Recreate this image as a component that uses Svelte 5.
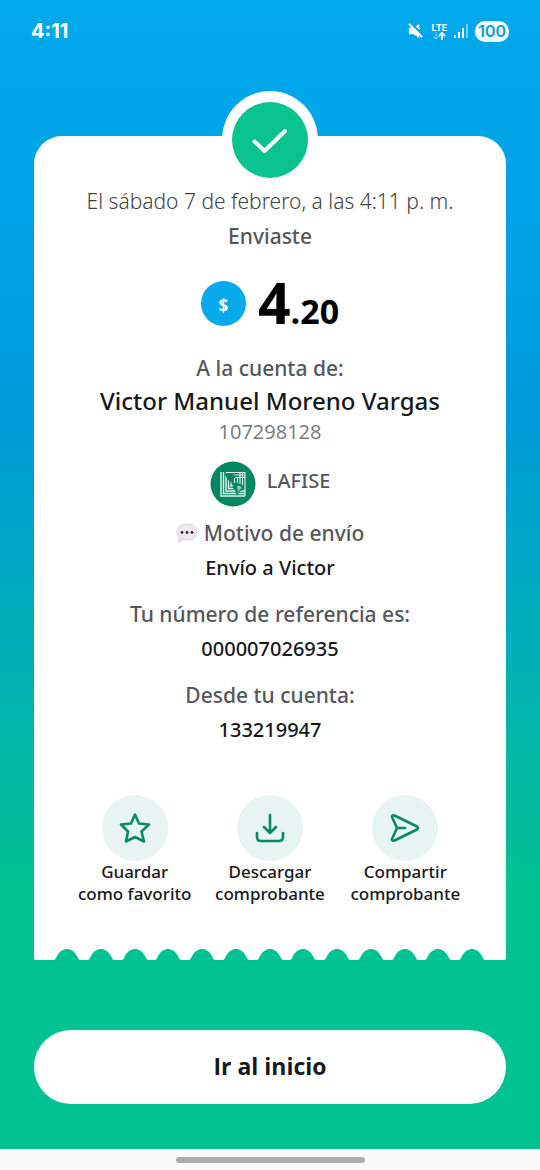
<script lang="ts">
  const scallops = Array.from({ length: 13 }, (_, i) => 33 + Math.round(i * 33.75))
  const edge =
    'M0 0H472V9Q472 11 470 11' +
    [...scallops].reverse().map((x) => `H${x + 13}Q${x + 11} 10 ${x + 10} 7C${x + 7} 2 ${x + 4} 0 ${x} 0C${x - 4} 0 ${x - 7} 2 ${x - 10} 7Q${x - 11} 10 ${x - 13} 11`).join('') +
    'H2Q0 11 0 9Z'

  const actions = [
    { icon: 'star', lines: ['Guardar', 'como favorito'] },
    { icon: 'download', lines: ['Descargar', 'comprobante'] },
    { icon: 'send', lines: ['Compartir', 'comprobante'] },
  ]
</script>

<div class="screen">
  <header class="status">
    <span class="time">4:11</span>
    <div class="indicators">
      <svg width="16" height="16" viewBox="0 0 17 17" fill="#fff">
        <path d="M1 5h5l6-4v15l-6-4H1z" />
        <path d="M3 0l14 14" stroke="#00a9ec" stroke-width="2.500" />
        <path d="M1 1l14 14" stroke="#fff" stroke-width="2" />
      </svg>
      <div class="network">
        <span>LTE</span>
        <svg width="14" height="8" viewBox="0 0 14 8" fill="none" stroke="#fff">
          <path d="M4 0v7M1.500 4.500L4 7l2.500-2.500" opacity=".5" />
          <path d="M10 8V1M7 4l3-3 3 3" stroke-width="1.800" />
        </svg>
      </div>
      <svg width="14" height="16" viewBox="0 0 14 16" fill="#fff">
        <path d="M0 12h2v3H0zM4 9h2v6H4zM8 5h2v10H8z" />
        <path d="M12 1h2v14h-2z" opacity=".45" />
      </svg>
      <span class="battery">100</span>
    </div>
  </header>

  <main>
    <section class="receipt">
      <div class="badge">
        <svg width="76" height="76" viewBox="0 0 76 76" fill="none">
          <circle cx="38" cy="38" r="38" fill="#09c38f" />
          <path d="M22.500 39.500L32.500 49L53 29" stroke="#fff" stroke-width="4" stroke-linecap="round" stroke-linejoin="round" />
        </svg>
      </div>

      <div class="details">
        <p class="date">El sábado 7 de febrero, a las 4:11 p. m.</p>
        <p class="label sent">Enviaste</p>

        <div class="amount">
          <span class="currency">$</span>
          <p class="value">4<small>.20</small></p>
        </div>

        <p class="label">A la cuenta de:</p>
        <h1>Victor Manuel Moreno Vargas</h1>
        <p class="account">107298128</p>

        <div class="bank">
          <svg width="46" height="46" viewBox="0 0 46 46">
            <circle cx="23" cy="23" r="22.500" fill="#078661" />
            <g fill="none" stroke="#e4f4ee">
              <path d="M11 11v24h24M13.500 11v21.500H35M16 12v18h19M18.500 18v9.500H28M21 21v4h5" stroke-width="1.400" />
              <path d="M16 11.500h19M22 14h13M25 16.500h10M35 11v24M32.500 11v13M30 12v11M27.500 16v6M24.500 17v5" stroke-width="1.100" />
            </g>
            <path d="M13 13l4-1 4 1 4 1-2 3-2 1-1 3 3 2-3-1-3-5-2-3z" fill="#078661" />
            <path d="M24 24l4-1 5 3-1 3-3 2-2 4-2-6-3-3z" fill="#078661" />
            <path d="M27 25l3 0 2 2-3 2-1 3z" fill="#8fcbb5" />
          </svg>
          <span>LAFISE</span>
        </div>

        <p class="label reason">
          <svg width="22" height="20" viewBox="0 0 22 20">
            <path d="M11 1C17 1 21 4 21 9s-4 8-10 8c-1.500 0-3-.2-4-.6C5.500 18 3.500 19 2 19c1-1 1.500-2.500 1-4.500C1.500 13 1 11 1 9c0-5 4-8 10-8z" fill="#eceaf0" stroke="#cfcbd4" stroke-width=".8" />
            <g fill="#302f35">
              <circle cx="6" cy="9.500" r="1.400" />
              <circle cx="11" cy="9.500" r="1.400" />
              <circle cx="16" cy="9.500" r="1.400" />
            </g>
          </svg>
          Motivo de envío
        </p>
        <p class="data">Envío a Victor</p>

        <p class="label">Tu número de referencia es:</p>
        <p class="data">000007026935</p>

        <p class="label">Desde tu cuenta:</p>
        <p class="data">133219947</p>

        <div class="actions">
          {#each actions as action}
            <button type="button">
              <span class="icon">
                <svg width="32" height="32" viewBox="0 0 32 32" fill="none" stroke="#088a63" stroke-width="2.600" stroke-linecap="round" stroke-linejoin="round">
                  {#if action.icon === 'star'}
                    <path d="M16 2.500L20 11.500L30 12.500L22.500 19.500L25 29.500L16 25L7 29.500L9 19.500L2 12.500L12 11.500Z" />
                  {:else if action.icon === 'download'}
                    <path d="M16 3v18M10 15l6 6 6-6M3 21v4q0 4 4 4h18q4 0 4-4v-4" />
                  {:else}
                    <path d="M5.500 3.500L28 14.500Q30 16 28 17.500L5.500 28.500Q3 29.500 3 27L8 16L3 5Q3 2.500 5.500 3.500ZM8 16h8" />
                  {/if}
                </svg>
              </span>
              {action.lines[0]}<br />{action.lines[1]}
            </button>
          {/each}
        </div>
      </div>

      <svg class="edge" viewBox="0 0 472 11" preserveAspectRatio="none">
        <path d={edge} fill="#fff" />
      </svg>
    </section>

    <button type="button" class="home">Ir al inicio</button>
  </main>

  <footer><span></span></footer>
</div>

<style>
  :global(body) {
    margin: 0;
  }

  .screen {
    display: flex;
    flex-direction: column;
    min-height: 100vh;
    background: linear-gradient(#00a9ec 0%, #00a3e6 18%, #009bd8 36%, #00b0b5 56%, #00c391 76%);
    color: #17181b;
    font-family: 'Noto Sans', sans-serif;
    text-align: center;
  }

  .status {
    display: flex;
    align-items: center;
    justify-content: space-between;
    height: 62px;
    padding: 0 31px;
    color: #fff;
    font-family: Inter, sans-serif;
  }

  .time {
    font-size: 20px;
    font-weight: 700;
  }

  .indicators {
    display: flex;
    align-items: center;
    gap: 7px;
  }

  .indicators svg {
    display: block;
  }

  .network {
    display: flex;
    flex-direction: column;
    align-items: center;
    font-size: 9px;
    font-weight: 700;
    line-height: 9px;
  }

  .battery {
    padding: 0 3px;
    border-radius: 10px;
    background: #effbff;
    color: #149bd3;
    font-size: 16px;
    font-weight: 600;
    line-height: 21px;
  }

  main {
    display: flex;
    flex: 1;
    flex-direction: column;
    padding: 74px 34px 45px;
  }

  .receipt {
    position: relative;
  }

  .badge {
    position: absolute;
    top: -45px;
    left: 50%;
    padding: 11px 10px;
    border-radius: 50%;
    background: #fff;
    transform: translateX(-50%);
  }

  .badge svg {
    display: block;
  }

  .details {
    padding: 49px 33px 44px;
    border-radius: 28px 28px 0 0;
    background: #fff;
  }

  p,
  h1 {
    margin: 0;
  }

  .date {
    color: #3f4145;
    font-size: 21px;
    font-weight: 300;
    line-height: 32px;
  }

  .label {
    margin-top: 12px;
    color: #55575c;
    font-size: 21px;
    font-weight: 500;
    line-height: 34px;
  }

  .label.sent {
    margin-top: 2px;
  }

  .amount {
    display: flex;
    align-items: center;
    justify-content: center;
    gap: 12px;
    height: 72px;
    margin-top: 14px;
  }

  .currency {
    width: 45px;
    padding-top: 5px;
    border-radius: 50%;
    background: #06a9ea;
    color: #fff;
    font-size: 17px;
    font-weight: 700;
    line-height: 40px;
  }

  .value {
    padding-top: 6px;
    color: #000;
    font-family: 'Open Sans', sans-serif;
    font-size: 57px;
    font-weight: 700;
    line-height: 72px;
  }

  .value small {
    font-size: 34px;
  }

  h1 {
    font-size: 24px;
    font-weight: 500;
    line-height: 31px;
  }

  .account {
    color: #77797c;
    font-family: 'Open Sans', sans-serif;
    font-size: 20px;
    font-weight: 400;
    line-height: 32px;
  }

  .bank {
    display: flex;
    justify-content: center;
    gap: 11px;
    margin-top: 13px;
    color: #55575c;
    font-size: 20px;
    font-weight: 500;
    line-height: 40px;
  }

  .label.reason {
    display: flex;
    align-items: center;
    justify-content: center;
    gap: 6px;
    margin-top: 9px;
  }

  .data {
    font-size: 20px;
    font-weight: 500;
    line-height: 35px;
  }

  .actions {
    display: grid;
    grid-template-columns: repeat(3, 1fr);
    margin-top: 48px;
  }

  button {
    padding: 0;
    border: 0;
    background: none;
    color: inherit;
    font-family: inherit;
    cursor: pointer;
  }

  .actions button {
    font-size: 17px;
    font-weight: 500;
    line-height: 22px;
  }

  .icon {
    display: grid;
    place-items: center;
    width: 66px;
    height: 66px;
    margin: 0 auto;
    border-radius: 50%;
    background: #e8f4f1;
  }

  .edge {
    display: block;
    width: 100%;
    height: 11px;
  }

  .home {
    width: 100%;
    margin-top: auto;
    padding-bottom: 2px;
    border-radius: 37px;
    background: #fff;
    font-family: 'Open Sans', sans-serif;
    font-size: 23px;
    font-weight: 700;
    line-height: 72px;
  }

  footer {
    display: flex;
    justify-content: center;
    height: 13px;
    padding-top: 8px;
    background: #fafafa;
  }

  footer span {
    width: 35%;
    height: 6px;
    border-radius: 3px;
    background: #adadad;
  }
</style>
